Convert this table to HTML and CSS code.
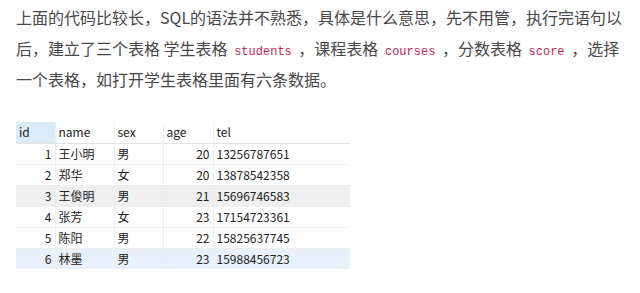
FILE: index.html
```html
<!DOCTYPE html>
<html lang="zh">
<head>
<meta charset="utf-8">
<link rel="stylesheet" href="styles.css">
</head>
<body>
<div class="article">
  <p class="para">上面的代码比较长，SQL的语法并不熟悉，具体是什么意思，先不用管，执行完语句以后，建立了三个表格 学生表格 <code class="code">students</code> ，课程表格 <code class="code">courses</code> ，分数表格 <code class="code">score</code> ，选择一个表格，如打开学生表格里面有六条数据。</p>
  <table class="grid">
    <thead>
      <tr><th class="c-id sel">id</th><th class="c-name">name</th><th class="c-sex">sex</th><th class="c-age">age</th><th class="c-tel">tel</th></tr>
    </thead>
    <tbody>
      <tr><td class="num">1</td><td>王小明</td><td>男</td><td class="num">20</td><td>13256787651</td></tr>
      <tr><td class="num">2</td><td>郑华</td><td>女</td><td class="num">20</td><td>13878542358</td></tr>
      <tr class="alt"><td class="num">3</td><td>王俊明</td><td>男</td><td class="num">21</td><td>15696746583</td></tr>
      <tr><td class="num">4</td><td>张芳</td><td>女</td><td class="num">23</td><td>17154723361</td></tr>
      <tr><td class="num">5</td><td>陈阳</td><td>男</td><td class="num">22</td><td>15825637745</td></tr>
      <tr class="cur"><td class="num">6</td><td>林墨</td><td>男</td><td class="num">23</td><td>15988456723</td></tr>
    </tbody>
  </table>
</div>
</body>
</html>
```
FILE: styles.css
```css
html, body {
  margin: 0;
  padding: 0;
  background: #ffffff;
}
.article {
  padding: 2px 0 0 16px;
  width: 614px;
}
.para {
  margin: 0;
  font-family: "Noto Sans CJK SC", "Noto Sans", sans-serif;
  font-size: 16px;
  line-height: 31px;
  color: #474747;
}
.code {
  font-family: "Liberation Mono", monospace;
  font-size: 12px;
  line-height: 1;
  padding: 0 3px;
  color: #c7254e;
}
.grid {
  margin-top: 27px;
  border-collapse: collapse;
  font-family: "Noto Sans CJK SC", "Noto Sans", sans-serif;
  font-size: 12px;
  color: #222222;
}
.grid th, .grid td {
  height: 21px;
  padding: 0 3px;
  box-sizing: border-box;
  border-bottom: 1px solid #eeeeee;
  border-right: 1px solid #eeeeee;
  font-weight: normal;
  text-align: left;
  line-height: 20px;
}
.grid th {
  border-bottom: 1px solid #e4e4e4;
}
.grid td:last-child, .grid th:last-child {
  border-right: none;
}
.c-id { width: 39px; }
.c-name { width: 59px; }
.c-sex { width: 49px; }
.c-age { width: 50px; }
.c-tel { width: 137px; }
.grid th.sel { background: #dcebf8; }
.grid td.num { text-align: right; }
.grid tr.alt td { background: #efefef; }
.grid tr.cur td { background: #e8f1fb; }
.grid tbody tr:last-child td { border-bottom: none; }
```
